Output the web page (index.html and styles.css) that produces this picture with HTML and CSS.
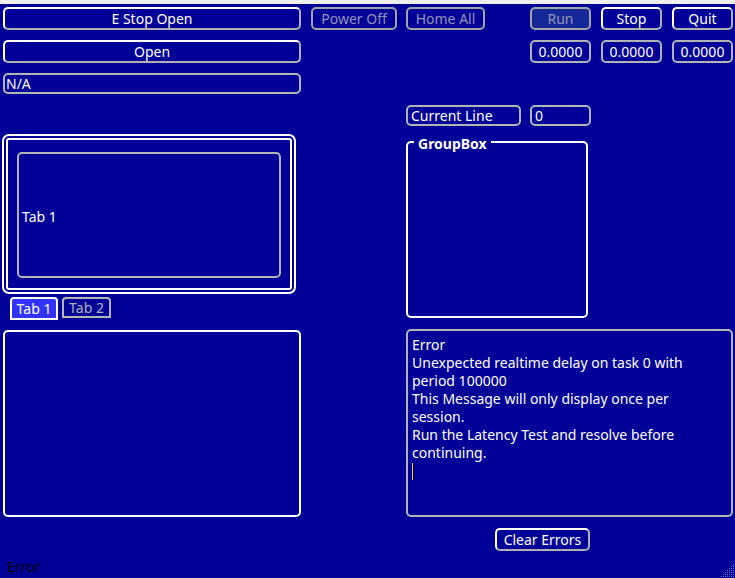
FILE: index.html
```html
<!DOCTYPE html>
<html lang="en">
<head>
  <meta charset="UTF-8">
  <title>Machine Control</title>
  <link rel="stylesheet" href="styles.css">
</head>
<body>
  <div class="title-strip"></div>
  <div class="window">
    <div class="row row-1">
      <button class="btn wide">E Stop Open</button>
      <button class="btn disabled power">Power Off</button>
      <button class="btn disabled home">Home All</button>
      <button class="btn disabled run">Run</button>
      <button class="btn small">Stop</button>
      <button class="btn small">Quit</button>
    </div>
    <div class="row row-2">
      <button class="btn wide">Open</button>
      <div class="field num first">0.0000</div>
      <div class="field num">0.0000</div>
      <div class="field num">0.0000</div>
    </div>
    <div class="row row-3">
      <div class="field wide">N/A</div>
    </div>

    <div class="main">
      <div class="left-col">
        <div class="tab-frame">
          <div class="tab-page">Tab 1</div>
        </div>
        <div class="tab-bar">
          <span class="tab active">Tab 1</span>
          <span class="tab">Tab 2</span>
        </div>
        <div class="plain-box"></div>
      </div>

      <div class="right-col">
        <div class="line-row">
          <div class="field line-label">Current Line</div>
          <div class="field line-value">0</div>
        </div>
        <div class="group-box">
          <span class="group-title">GroupBox</span>
        </div>
        <div class="error-box">
          <div>Error</div>
          <div>Unexpected realtime delay on task 0 with period 100000</div>
          <div>This Message will only display once per session.</div>
          <div>Run the Latency Test and resolve before continuing.</div>
          <div class="caret"></div>
        </div>
        <button class="btn clear">Clear Errors</button>
      </div>
    </div>

    <div class="status">Error</div>
    <svg class="grip" width="16" height="16" viewBox="0 0 16 16">
      <g fill="#6a6ac0">
        <rect x="14" y="2" width="1" height="1"/>
        <rect x="12" y="4" width="1" height="1"/><rect x="14" y="4" width="1" height="1"/>
        <rect x="10" y="6" width="1" height="1"/><rect x="12" y="6" width="1" height="1"/><rect x="14" y="6" width="1" height="1"/>
        <rect x="8" y="8" width="1" height="1"/><rect x="10" y="8" width="1" height="1"/><rect x="12" y="8" width="1" height="1"/><rect x="14" y="8" width="1" height="1"/>
        <rect x="6" y="10" width="1" height="1"/><rect x="8" y="10" width="1" height="1"/><rect x="10" y="10" width="1" height="1"/><rect x="12" y="10" width="1" height="1"/><rect x="14" y="10" width="1" height="1"/>
        <rect x="4" y="12" width="1" height="1"/><rect x="6" y="12" width="1" height="1"/><rect x="8" y="12" width="1" height="1"/><rect x="10" y="12" width="1" height="1"/><rect x="12" y="12" width="1" height="1"/><rect x="14" y="12" width="1" height="1"/>
        <rect x="2" y="14" width="1" height="1"/><rect x="4" y="14" width="1" height="1"/><rect x="6" y="14" width="1" height="1"/><rect x="8" y="14" width="1" height="1"/><rect x="10" y="14" width="1" height="1"/><rect x="12" y="14" width="1" height="1"/><rect x="14" y="14" width="1" height="1"/>
      </g>
    </svg>
  </div>
</body>
</html>
```

FILE: styles.css
```css
html, body {
  margin: 0;
  height: 100%;
  overflow: hidden;
}
body {
  background-color: #000099;
  font-family: "Noto Sans", "Open Sans", sans-serif;
  font-size: 14px;
  color: #fff;
}
.title-strip {
  height: 4px;
  background-color: #efefef;
}
.window {
  position: relative;
  height: 574px;
  padding: 3px 0 0 3px;
  box-sizing: border-box;
}
.row {
  display: flex;
  align-items: center;
}
.row-1 {
  height: 23px;
}
.row-2 {
  height: 23px;
  margin-top: 10px;
}
.row-3 {
  height: 21px;
  margin-top: 10px;
}
.btn {
  box-sizing: border-box;
  height: 23px;
  padding: 0;
  font-family: inherit;
  font-size: 14px;
  line-height: 19px;
  color: #fff;
  background-color: #000099;
  border: 2px solid #b0b0b0;
  border-top-color: #fff;
  border-left-color: #fff;
  border-radius: 5px;
  text-align: center;
}
.btn.wide {
  width: 298px;
}
.btn.disabled {
  color: #9494b4;
  border-color: #a4a4a4;
}
.btn.power {
  width: 86px;
  margin-left: 10px;
}
.btn.home {
  width: 79px;
  margin-left: 9px;
}
.btn.run {
  width: 61px;
  margin-left: 45px;
  background-color: #142898;
}
.btn.small {
  width: 61px;
  margin-left: 10px;
}
.field {
  box-sizing: border-box;
  height: 21px;
  border: 2px solid #b4b4b4;
  border-radius: 5px;
  line-height: 17px;
  padding: 0 1px;
  white-space: nowrap;
}
.field.wide {
  width: 298px;
}
.field.num {
  width: 61px;
  height: 23px;
  line-height: 19px;
  margin-left: 10px;
  text-align: center;
  padding: 0;
}
.field.num.first {
  margin-left: 229px;
}
.main {
  display: flex;
  margin-top: 11px;
}
.left-col {
  width: 298px;
}
.tab-frame {
  box-sizing: border-box;
  width: 294px;
  height: 160px;
  margin-top: 29px;
  margin-left: -1px;
  border: 6px double #fff;
  border-radius: 7px;
  padding: 12px 9px 8px 9px;
}
.tab-page {
  box-sizing: border-box;
  height: 126px;
  border: 2px solid #b4b4b4;
  border-radius: 5px;
  display: flex;
  align-items: center;
  padding: 2px 3px 0;
}
.tab-bar {
  display: flex;
  gap: 4px;
  margin: 3px 0 0 7px;
  height: 24px;
  align-items: flex-start;
}
.tab {
  box-sizing: border-box;
  width: 48px;
  height: 23px;
  text-align: center;
  line-height: 19px;
  border: 2px solid #fff;
  border-radius: 4px 4px 0 0;
  background-color: #3333ff;
}
.tab + .tab {
  width: 49px;
  height: 21px;
  line-height: 17px;
  background-color: transparent;
  border-color: #b4b4b4;
  color: #b4b4b4;
}
.plain-box {
  box-sizing: border-box;
  height: 187px;
  margin-top: 9px;
  border: 2px solid #fff;
  border-radius: 5px;
}
.right-col {
  margin-left: 105px;
  width: 327px;
}
.line-row {
  display: flex;
}
.field.line-label {
  width: 115px;
  padding-left: 3px;
}
.field.line-value {
  width: 61px;
  margin-left: 9px;
  padding-left: 3px;
}
.group-box {
  position: relative;
  box-sizing: border-box;
  width: 182px;
  height: 177px;
  margin-top: 15px;
  border: 2px solid #fff;
  border-radius: 5px;
}
.group-title {
  position: absolute;
  top: -8px;
  left: 6px;
  padding: 0 4px;
  background-color: #000099;
  font-weight: bold;
  line-height: 18px;
}
.error-box {
  box-sizing: border-box;
  height: 188px;
  margin-top: 11px;
  border: 2px solid #b4b4b4;
  border-radius: 5px;
  padding: 5px 40px 0 4px;
  line-height: 18px;
}
.caret {
  width: 1px;
  height: 17px;
  margin-top: 1px;
  background-color: #ffd000;
}
.btn.clear {
  display: block;
  width: 95px;
  margin: 11px 0 0 89px;
}
.status {
  position: absolute;
  left: 7px;
  bottom: 1px;
  color: #000;
  line-height: 20px;
}
.grip {
  position: absolute;
  right: 0;
  bottom: 0;
}
```
